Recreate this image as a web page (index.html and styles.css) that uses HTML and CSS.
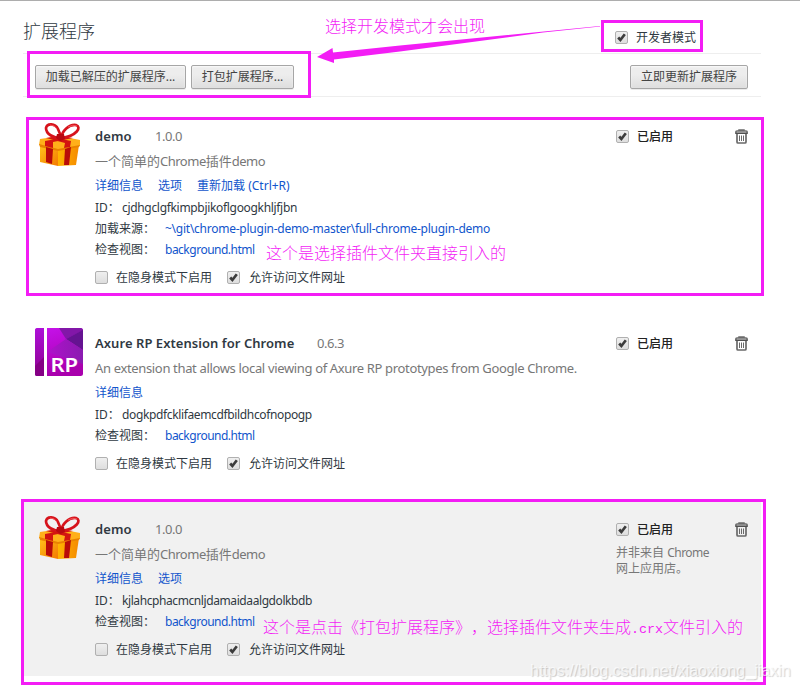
FILE: index.html
```
<!DOCTYPE html>
<html lang="zh-CN">
<head>
<meta charset="utf-8">
<title>扩展程序</title>
<link rel="stylesheet" href="styles.css">
</head>
<body>
<svg class="defs" aria-hidden="true">
  <defs>
    <linearGradient id="box" x1="0" x2="1" y1="0" y2="1"><stop offset="0" stop-color="#ffc21a"/><stop offset="1" stop-color="#f47a00"/></linearGradient>
    <linearGradient id="boxr" x1="0" x2="1"><stop offset="0" stop-color="#ffb400"/><stop offset="1" stop-color="#f58a00"/></linearGradient>
    <linearGradient id="axure" x1="0" y1="0" x2="0.3" y2="1"><stop offset="0" stop-color="#c713ee"/><stop offset="1" stop-color="#a900ad"/></linearGradient>
    <linearGradient id="facet" x1="0" y1="0" x2="1" y2="0"><stop offset="0" stop-color="#b010cc"/><stop offset="1" stop-color="#8a1cb0"/></linearGradient>
    <linearGradient id="spine" x1="0" y1="0" x2="0" y2="1"><stop offset="0" stop-color="#ad10d8"/><stop offset="1" stop-color="#8d008f"/></linearGradient>
    <symbol id="gift" viewBox="0 0 48 48">
      <path d="M5 25 23 28 23 45 5 41Z" fill="url(#box)"/>
      <path d="M23 28 44 24 41 44 23 45Z" fill="url(#boxr)"/>
      <path d="M5 18 25 15 45 19 45 25 23 29 4 24Z" fill="#ffb01a"/>
      <path d="M4 23 23 28 45 24 44 26 23 30 5 26Z" fill="#e98200"/>
      <path d="M11 17 17 16 36 20 35 26 29 27 30 22Z" fill="#d31410"/>
      <path d="M32 16 38 17 18 21 18 27 10 25 10 20Z" fill="#d31410"/>
      <path d="M11 26 18 28 17 43 11 41ZM30 28 36 26 34 44 29 44Z" fill="#b90c08"/>
      <path d="M26 17C18 17 11 13 11 7C12 2 20 2 23 8Q25 12 26 17Z" fill="none" stroke="#d6131b" stroke-width="2.7"/>
      <path d="M26 17C27 10 34 3 41 4C47 6 42 15 26 17Z" fill="none" stroke="#d6131b" stroke-width="2.7"/>
      <path d="M22 13 29 13 30 18 25 20 21 17Z" fill="#b80910"/>
      <path d="M15 4Q20 4 22 8M33 6Q38 3 42 5" fill="none" stroke="#f4555a" stroke-width="1"/>
    </symbol>
    <symbol id="check" viewBox="0 0 13 13"><path d="M3.2 6.5 5.4 9 9.8 3.3" fill="none" stroke="#3c3c3c" stroke-width="2.7"/></symbol>
    <symbol id="trash" viewBox="0 0 13 15">
      <path d="M4 2V1H9V2M0.8 5V3Q0.8 2 2 2H11Q12.2 2 12.2 3V5" fill="none" stroke="#6a6a6a" stroke-width="1.5"/>
      <path d="M1 4.2H12" stroke="#505050" stroke-width="1.6"/>
      <path d="M2 5V13Q2 14 3 14H10Q11 14 11 13V5" fill="none" stroke="#6a6a6a" stroke-width="1.7"/>
      <path d="M4.5 6.5V12M6.5 6.5V12M8.5 6.5V12" stroke="#6a6a6a" stroke-width="1"/>
    </symbol>
  </defs>
</svg>

<main class="page">
  <header class="top">
    <h1>扩展程序</h1>
    <label class="dev"><span class="cb"><svg><use href="#check"/></svg></span>开发者模式</label>
  </header>
  <div class="toolbar">
    <button class="w-load">加载已解压的扩展程序...</button>
    <button class="w-pack">打包扩展程序...</button>
    <button class="w-update">立即更新扩展程序</button>
  </div>

  <section class="item">
    <svg class="icon"><use href="#gift"/></svg>
    <div class="info">
      <div class="name"><b class="demo">demo</b><span class="ver">1.0.0</span></div>
      <div class="desc">一个简单的<span class="lat">Chrome</span>插件<span class="lat">demo</span></div>
      <div class="links"><a>详细信息</a><a>选项</a><a>重新加载 <span class="ctrl">(Ctrl+R)</span></a></div>
      <div class="row"><span>ID：</span><span class="id1">cjdhgclgfkimpbjikoflgoogkhljfjbn</span></div>
      <div class="row"><span class="key">加载来源：</span><a class="src">~\git\chrome-plugin-demo-master\full-chrome-plugin-demo</a></div>
      <div class="row"><span class="key">检查视图：</span><a class="bg">background.html</a></div>
      <div class="opts"><span class="cb"></span><span class="opt">在隐身模式下启用</span><span class="cb"><svg><use href="#check"/></svg></span><span>允许访问文件网址</span></div>
    </div>
    <div class="state"><label class="enabled"><span class="cb"><svg><use href="#check"/></svg></span>已启用</label></div>
    <svg class="trash"><use href="#trash"/></svg>
  </section>

  <section class="item">
    <svg class="icon" viewBox="0 0 48 48">
      <rect width="48" height="48" rx="2.5" fill="url(#axure)"/>
      <path d="M24 0H45.500Q48 0 48 2.500L31 11Z" fill="#8217a8"/>
      <path d="M48 2V22L31 11Z" fill="#651391"/>
      <path d="M31 11 48 22V36L12 24Z" fill="url(#facet)"/>
      <path d="M2.500 0H9V48H2.500Q0 48 0 45.500V2.500Q0 0 2.500 0Z" fill="url(#spine)"/>
      <path d="M0 38 9 29V48H2Q0 48 0 45Z" fill="#850085"/>
      <rect x="9" width="3" height="48" fill="#fff"/>
      <text x="15.500" y="43.500" class="rp" textLength="27.500" lengthAdjust="spacingAndGlyphs">RP</text>
    </svg>
    <div class="info">
      <div class="name"><b class="axure">Axure RP Extension for Chrome</b><span class="ver">0.6.3</span></div>
      <div class="desc axdesc">An extension that allows local viewing of Axure RP prototypes from Google Chrome.</div>
      <div class="links"><a>详细信息</a></div>
      <div class="row"><span>ID：</span><span class="id2">dogkpdfcklifaemcdfbildhcofnopogp</span></div>
      <div class="row"><span class="key">检查视图：</span><a class="bg">background.html</a></div>
      <div class="opts"><span class="cb"></span><span class="opt">在隐身模式下启用</span><span class="cb"><svg><use href="#check"/></svg></span><span>允许访问文件网址</span></div>
    </div>
    <div class="state"><label class="enabled"><span class="cb"><svg><use href="#check"/></svg></span>已启用</label></div>
    <svg class="trash"><use href="#trash"/></svg>
  </section>

  <section class="item shaded">
    <svg class="icon"><use href="#gift"/></svg>
    <div class="info">
      <div class="name"><b class="demo">demo</b><span class="ver">1.0.0</span></div>
      <div class="desc">一个简单的<span class="lat">Chrome</span>插件<span class="lat">demo</span></div>
      <div class="links"><a>详细信息</a><a>选项</a></div>
      <div class="row"><span>ID：</span><span class="id3">kjlahcphacmcnljdamaidaalgdolkbdb</span></div>
      <div class="row"><span class="key">检查视图：</span><a class="bg">background.html</a></div>
      <div class="opts"><span class="cb"></span><span class="opt">在隐身模式下启用</span><span class="cb"><svg><use href="#check"/></svg></span><span>允许访问文件网址</span></div>
    </div>
    <div class="state"><label class="enabled"><span class="cb"><svg><use href="#check"/></svg></span>已启用</label><p>并非来自 <span class="lat">Chrome</span><br>网上应用店。</p></div>
    <svg class="trash"><use href="#trash"/></svg>
  </section>
</main>

<div class="mark m-buttons"></div>
<div class="mark m-dev"></div>
<div class="mark m-first"></div>
<div class="mark m-last"></div>
<svg class="arrow" viewBox="0 0 300 50"><path d="M6 37 21.500 28 22 32.500 89 25.500 289 6V6.500L232 12.500 89 31.500 23 39.500 23 43Z" fill="#f31df5"/></svg>
<div class="note n-dev">选择开发模式才会出现</div>
<div class="note n-first">这个是选择插件文件夹直接引入的</div>
<div class="note n-last">这个是点击《打包扩展程序》，选择插件文件夹生成<span class="crx">.crx</span>文件引入的</div>
<div class="watermark">https://blog.csdn.net/xiaoxiong_jiaxin</div>
</body>
</html>
```
FILE: styles.css
```
* { box-sizing: border-box; }
body {
  margin: 0;
  position: relative;
  width: 800px;
  height: 689px;
  overflow: hidden;
  background: #fff;
  border-top: 1px solid #adadad;
  color: #303942;
  font: 12px/21px "Noto Sans", "Noto Sans CJK SC", sans-serif;
  white-space: nowrap;
}
.defs { position: absolute; width: 0; height: 0; }
.page { width: 738px; margin-left: 23px; }
.top {
  height: 53px;
  border-bottom: 1px solid #eee;
  display: flex;
  align-items: flex-start;
  justify-content: space-between;
}
h1 { margin: 17px 0 0; font-size: 18px; line-height: 26px; font-weight: 300; }
.dev { display: flex; align-items: center; gap: 8px; margin: 26px 65px 0 0; }
.cb {
  display: block;
  flex: none;
  width: 13px;
  height: 13px;
  border: 1px solid #b0b0b0;
  border-radius: 2px;
  background: linear-gradient(#efefef, #dedede);
}
.cb svg { display: block; width: 13px; height: 13px; margin: -1px; }
.toolbar {
  height: 43px;
  border-bottom: 1px solid #eee;
  display: flex;
  align-items: center;
  gap: 5px;
  padding: 3px 13px 0 12px;
}
button {
  height: 24px;
  padding: 0;
  border: 1px solid #a6a6a6;
  border-radius: 2px;
  background: linear-gradient(#ededed 38%, #dedede);
  box-shadow: 0 1px 0 rgba(0, 0, 0, .08), inset 0 1px 2px rgba(255, 255, 255, .75);
  color: #444;
  font: inherit;
  line-height: 20px;
}
.w-load { width: 151px; }
.w-pack { width: 103px; }
.w-update { width: 118px; margin-left: auto; }

.item { display: flex; align-items: flex-start; margin-top: 12px; padding: 12px 13px 9px 12px; }
.shaded { background: #f1f1f1; }
.icon { width: 48px; height: 48px; margin-right: 12px; flex: none; }
.rp { font: 600 20px "Open Sans", sans-serif; fill: #fff; stroke: #fff; stroke-width: .2px; }
.info { width: 520px; padding-top: 3px; }
.name { display: flex; height: 24px; line-height: 24px; font-size: 13px; }
.name b { font-weight: 600; color: #303942; }
.demo { width: 60px; letter-spacing: .1px; }
.axure { width: 222px; letter-spacing: .05px; }
.ver { font-size: 13px; letter-spacing: -.45px; color: #777; }
.desc { height: 26px; line-height: 26px; font-size: 13px; color: #777; }
.lat { letter-spacing: -.5px; }
.axdesc { letter-spacing: -.345px; }
.links { display: flex; gap: 15px; height: 23px; line-height: 23px; }
a { color: #15c; }
.row { display: flex; height: 21px; }
.row > span:first-child { width: 27px; }
.row > .key:first-child { width: 70px; }
.id1 { letter-spacing: -.32px; }
.id2 { letter-spacing: -.36px; }
.id3 { letter-spacing: -.41px; }
.src { letter-spacing: -.25px; }
.bg { letter-spacing: -.5px; }
.opts { display: flex; align-items: center; height: 35px; }
.opts span + span { margin-left: 8px; }
.opts .opt + .cb { margin-left: 15px; }
.opts .cb + span:last-child { margin-left: 9px; }
.state { width: 119px; margin-left: 1px; padding-top: 3px; }
.enabled { display: flex; align-items: center; gap: 8px; height: 24px; font-weight: 500; color: #222; }
.state p { margin: 4px 0 0; line-height: 16px; color: #777; }
.trash { width: 13px; height: 15px; margin-top: 8px; flex: none; }

.mark { position: absolute; border: 3px solid #f31df5; }
.m-buttons { left: 27px; top: 50px; width: 284px; height: 47px; }
.m-dev { left: 601px; top: 19px; width: 102px; height: 32px; }
.m-first { left: 26px; top: 116px; width: 738px; height: 179px; }
.m-last { left: 21px; top: 498px; width: 745px; height: 186px; }
.arrow { position: absolute; left: 311px; top: 19px; width: 300px; height: 50px; }
.note {
  position: absolute;
  color: #f31df5;
  font: 300 16px/22px "Noto Sans CJK SC", sans-serif;
  font-kerning: none;
  text-spacing-trim: space-all;
}
.n-dev { left: 325px; top: 13px; }
.n-first { left: 266px; top: 240px; }
.n-last { left: 263px; top: 614px; }
.crx { font-family: "Liberation Mono", monospace; font-size: 13.330px; }
.watermark {
  position: absolute;
  left: 530px;
  top: 659px;
  font: 16px/22px "Liberation Sans", sans-serif;
  color: rgba(255, 255, 255, .7);
  text-shadow: 1px 1px 1px rgba(0, 0, 0, .18);
}
```
